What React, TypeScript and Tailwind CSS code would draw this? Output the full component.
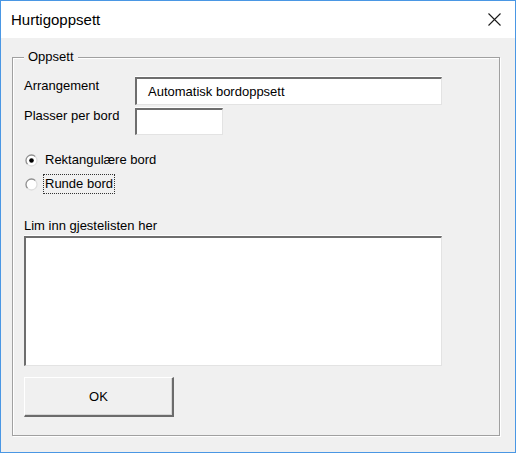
import React from 'react';

// Classic sunken edit box (dark top/left, light bottom/right)
function Sunken({ className = '', children }: { className?: string; children?: React.ReactNode }) {
  return (
    <div
      className={`bg-white border-t-2 border-l-2 border-r border-b border-t-[#6e6e6e] border-l-[#6e6e6e] border-r-[#e3e3e3] border-b-[#e3e3e3] shadow-[0_-1px_0_#fff] ${className}`}
    >
      {children}
    </div>
  );
}

function Radio({ checked }: { checked?: boolean }) {
  return (
    <svg width="13" height="13" viewBox="0 0 13 13" className="shrink-0 ml-[1px]">
      <circle cx="6.5" cy="6.5" r="5.5" fill="#fff" />
      <path d="M2.6 10.4 A5.5 5.5 0 0 1 10.4 2.6" fill="none" stroke="#8f8f8f" strokeWidth="1.3" />
      <path d="M10.4 2.6 A5.5 5.5 0 0 1 2.6 10.4" fill="none" stroke="#dedede" strokeWidth="1.3" />
      {checked && <circle cx="6.5" cy="6.5" r="2.3" fill="#000" />}
    </svg>
  );
}

export default function App() {
  return (
    <div className="w-[516px] h-[453px] border border-[#4a97e4] bg-[#f0f0f0] flex flex-col font-['Liberation_Sans',Arial,sans-serif] text-[13px] text-black">
      {/* Title bar */}
      <div className="h-[37px] bg-white flex items-center justify-between pl-[10px] pr-[14px] shrink-0">
        <span className="text-[15px] leading-[20px]">Hurtigoppsett</span>
        <svg width="13" height="13" viewBox="0 0 13 13">
          <path d="M0.5 0.5 L12.5 12.5 M12.5 0.5 L0.5 12.5" stroke="#1a1a1a" strokeWidth="1.1" />
        </svg>
      </div>

      {/* Body */}
      <div className="flex-1 flex flex-col pl-[11px] pr-[15px] pt-[19px] pb-[16px]">
        <div className="relative flex-1 border border-[#a0a0a0] shadow-[inset_1px_1px_0_#fff,1px_1px_0_#fff] pl-[11px] pt-[19px]">
          <span className="absolute left-[11px] top-[-9px] px-[4px] bg-[#f0f0f0] leading-[16px]">Oppsett</span>

          {/* Arrangement */}
          <div className="flex items-start">
            <span className="w-[111px] pt-[1px] leading-[16px]">Arrangement</span>
            <Sunken className="w-[307px] h-[28px] flex items-center pl-[11px]">
              <span className="leading-[16px]">Automatisk bordoppsett</span>
            </Sunken>
          </div>

          {/* Plasser per bord */}
          <div className="flex items-start mt-[3px]">
            <span className="w-[111px] leading-[16px]">Plasser per bord</span>
            <Sunken className="w-[88px] h-[27px]" />
          </div>

          {/* Radios */}
          <div className="mt-[13px] h-[24px] flex items-center">
            <Radio checked />
            <span className="ml-[5px] px-[1px] border border-transparent leading-[18px]">Rektangulære bord</span>
          </div>
          <div className="h-[24px] flex items-center">
            <Radio />
            <span className="ml-[5px] px-[1px] border border-dotted border-[#333] leading-[18px]">Runde bord</span>
          </div>

          {/* Guest list */}
          <div className="mt-[22px] leading-[16px]">Lim inn gjestelisten her</div>
          <Sunken className="mt-[2px] w-[418px] h-[130px]" />

          <button className="mt-[11px] w-[150px] h-[40px] bg-[#f0f0f0] border-t border-l border-t-white border-l-white border-r-2 border-b-2 border-r-[#6b6b6b] border-b-[#6b6b6b] shadow-[inset_-1px_-1px_0_#d6d6d6] flex items-center justify-center leading-[16px]">
            OK
          </button>
        </div>
      </div>
    </div>
  );
}
